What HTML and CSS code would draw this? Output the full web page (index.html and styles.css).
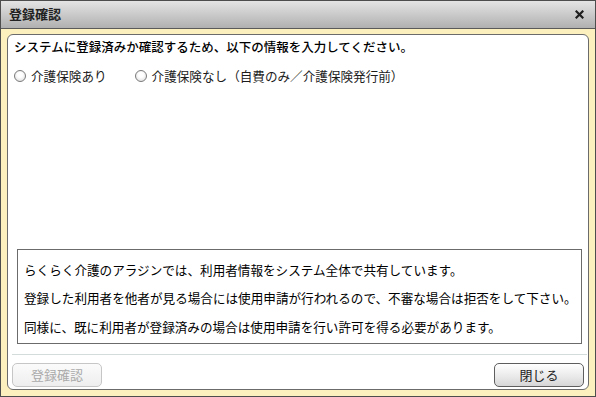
FILE: index.html
```html
<!DOCTYPE html>
<html lang="ja">
<head>
<meta charset="utf-8">
<title>登録確認</title>
<link rel="stylesheet" href="styles.css">
</head>
<body>
<div class="window">
  <div class="titlebar">
    <span class="title">登録確認</span>
    <svg class="close" width="9" height="9" viewBox="0 0 9 9"><path d="M1.5 1.5 L7.5 7.5 M7.5 1.5 L1.5 7.5" stroke="#1e1e1e" stroke-width="2.2" stroke-linecap="square"/></svg>
  </div>
  <div class="frame">
    <div class="panel">
      <p class="heading">システムに登録済みか確認するため、以下の情報を入力してください。</p>
      <div class="radios">
        <label class="opt"><span class="radio"></span>介護保険あり</label>
        <label class="opt"><span class="radio"></span>介護保険なし（自費のみ／介護保険発行前）</label>
      </div>
      <div class="info">
        <p>らくらく介護のアラジンでは、利用者情報をシステム全体で共有しています。</p>
        <p>登録した利用者を他者が見る場合には使用申請が行われるので、不審な場合は拒否をして下さい。</p>
        <p>同様に、既に利用者が登録済みの場合は使用申請を行い許可を得る必要があります。</p>
      </div>
      <div class="sep"></div>
      <div class="footer">
        <button class="btn disabled" disabled>登録確認</button>
        <button class="btn">閉じる</button>
      </div>
    </div>
  </div>
</div>
</body>
</html>
```
FILE: styles.css
```css
* { box-sizing: border-box; }
html, body { margin: 0; padding: 0; }
body {
  width: 596px;
  height: 397px;
  font-family: "Noto Sans CJK JP", "Noto Sans", sans-serif;
  color: #111;
  background: #fff;
}
.window {
  width: 596px;
  height: 397px;
  border: 1px solid #4d4d4d;
  display: flex;
  flex-direction: column;
}
.titlebar {
  height: 28px;
  flex: none;
  border-bottom: 1px solid #5a5a5a;
  background: linear-gradient(#e4e4e4, #b0b0b0);
  display: flex;
  align-items: center;
  justify-content: space-between;
  padding: 0 11px 1px 8px;
}
.title {
  font-size: 13px;
  font-weight: bold;
  color: #222;
  line-height: 18px;
}
.close { display: block; }
.frame {
  flex: 1;
  background: #fcf0bf;
  padding: 5px 6px 6px 6px;
  display: flex;
}
.panel {
  flex: 1;
  background: #fff;
  border: 1px solid #6b6b6b;
  border-radius: 6px;
  display: flex;
  flex-direction: column;
  padding: 3px 6px 2px 4px;
}
.heading {
  margin: 0 0 0 2px;
  font-size: 12.5px;
  font-weight: 500;
  line-height: 18px;
  color: #000;
  white-space: nowrap;
}
.radios {
  display: flex;
  margin: 11px 0 0 2px;
  font-size: 12.6px;
  line-height: 18px;
}
.opt {
  display: flex;
  align-items: center;
  white-space: nowrap;
  color: #1c1c1c;
}
.opt + .opt { margin-left: 28px; }
.radio {
  width: 12px;
  height: 12px;
  border-radius: 50%;
  border: 1px solid #7a7a7a;
  background: radial-gradient(circle at 50% 40%, #ffffff 30%, #d8d8d8 100%);
  margin-right: 5px;
  flex: none;
}
.info {
  margin: auto 0 0 5px;
  border: 1px solid #6b6b6b;
  padding: 6px 0 2px 6px;
  color: #000;
}
.info p {
  margin: 0;
  font-size: 12.6px;
  line-height: 28.3px;
  white-space: nowrap;
}
.sep {
  height: 1px;
  background: #d3dbdb;
  margin: 10px -5px 0 0;
}
.footer {
  display: flex;
  justify-content: space-between;
  margin: 8px -2px 0 0;
}
.btn {
  width: 90px;
  height: 24px;
  border-radius: 5px;
  border: 1px solid #5e5e5e;
  background: linear-gradient(#ffffff, #e8e8e8 60%, #d6d6d6);
  font-family: inherit;
  font-size: 13px;
  color: #222;
  padding: 0;
  line-height: 22px;
}
.btn.disabled {
  border-color: #c6c6c6;
  background: linear-gradient(#fbfbfb, #eeeeee);
  color: #aaaaaa;
}
```
